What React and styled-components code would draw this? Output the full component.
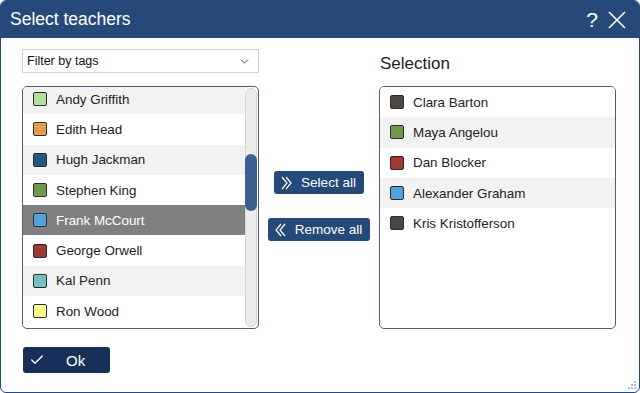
import React from "react";
import styled, { createGlobalStyle } from "styled-components";
import { ChevronDown, Check } from "lucide-react";

const teachers = [
  { name: "Andy Griffith", color: "#b3dea0" },
  { name: "Edith Head", color: "#e79c50" },
  { name: "Hugh Jackman", color: "#24577f" },
  { name: "Stephen King", color: "#6e9a50" },
  { name: "Frank McCourt", color: "#4ea3e0", selected: true },
  { name: "George Orwell", color: "#9e3a36" },
  { name: "Kal Penn", color: "#78bfc0" },
  { name: "Ron Wood", color: "#ffff8c" },
];

const selection = [
  { name: "Clara Barton", color: "#4f4742" },
  { name: "Maya Angelou", color: "#6e9a50" },
  { name: "Dan Blocker", color: "#9e3a36" },
  { name: "Alexander Graham", color: "#4ea3e0" },
  { name: "Kris Kristofferson", color: "#4f4742" },
];

// thin double chevron, flipped for "remove"
const Chevrons = ({ left }) => (
  <svg width="11" height="14" viewBox="0 0 11 14">
    <path
      d={left ? "M10 1 L5 7 L10 13 M6 1 L1 7 L6 13" : "M1 1 L6 7 L1 13 M5 1 L10 7 L5 13"}
      fill="none"
      stroke="#fff"
      strokeWidth="1.2"
    />
  </svg>
);

const App = () => {
  return (
    <>
      <GlobalStyle />
      <Dialog>
        <TitleBar>
          <Title>Select teachers</Title>
          <TitleTools>
            <Help>?</Help>
            <svg width="18" height="18" viewBox="0 0 18 18">
              <path d="M1 1 L17 17 M17 1 L1 17" stroke="#fff" strokeWidth="1.6" />
            </svg>
          </TitleTools>
        </TitleBar>
        <Body>
          <Columns>
            <Filter>
              <span>Filter by tags</span>
              <ChevronDown size={13} strokeWidth={1.6} color="#333" />
            </Filter>
            <div />
            <Heading>Selection</Heading>

            <ListBox>
              <Items offset="-3px">
                {teachers.map((t, i) => (
                  <Row key={t.name} striped={i % 2 === 0} selected={t.selected}>
                    <Swatch color={t.color} />
                    {t.name}
                  </Row>
                ))}
              </Items>
              <Track>
                <Thumb />
              </Track>
            </ListBox>

            <Actions>
              <ActionButton>
                <Chevrons />
                Select all
              </ActionButton>
              <ActionButton>
                <Chevrons left />
                Remove all
              </ActionButton>
            </Actions>

            <ListBox>
              <Items>
                {selection.map((t, i) => (
                  <Row key={t.name} striped={i % 2 === 1}>
                    <Swatch color={t.color} />
                    {t.name}
                  </Row>
                ))}
              </Items>
            </ListBox>
          </Columns>
          <Footer>
            <OkButton>
              <Check size={16} strokeWidth={2} />
              <span>Ok</span>
            </OkButton>
          </Footer>
        </Body>
        <Grip>
          <svg width="10" height="10" viewBox="0 0 10 10">
            <rect x="7" y="1" width="2" height="2" fill="#b8bec8" />
            <rect x="4" y="4" width="2" height="2" fill="#b8bec8" />
            <rect x="7" y="4" width="2" height="2" fill="#b8bec8" />
            <rect x="1" y="7" width="2" height="2" fill="#b8bec8" />
            <rect x="4" y="7" width="2" height="2" fill="#b8bec8" />
            <rect x="7" y="7" width="2" height="2" fill="#b8bec8" />
          </svg>
        </Grip>
      </Dialog>
    </>
  );
};

export default App;

const GlobalStyle = createGlobalStyle`
  html, body {
    margin: 0;
    padding: 0;
    background: #ffffff;
  }
  * {
    box-sizing: border-box;
  }
  body {
    font-family: "Liberation Sans", Arial, sans-serif;
  }
`;

const Dialog = styled.div`
  position: relative;
  width: 640px;
  height: 393px;
  border: 1px solid #254978;
  border-radius: 6px;
  overflow: hidden;
  background: #fff;
  display: flex;
  flex-direction: column;
`;

const TitleBar = styled.div`
  height: 37px;
  background: #254978;
  display: flex;
  align-items: center;
  justify-content: space-between;
  padding: 0 13px 0 9px;
  color: #fff;
  flex-shrink: 0;
`;

const Title = styled.div`
  font-size: 17.5px;
  padding-bottom: 1px;
`;

const TitleTools = styled.div`
  display: flex;
  align-items: center;
  gap: 10px;
`;

const Help = styled.span`
  font-size: 21px;
  line-height: 1;
`;

const Body = styled.div`
  flex: 1;
  padding: 11px 23px 0 21px;
  display: flex;
  flex-direction: column;
`;

const Columns = styled.div`
  display: grid;
  grid-template-columns: 237px 1fr 237px;
  grid-template-rows: 37px 243px;
`;

const Filter = styled.div`
  height: 24px;
  border: 1px solid #d0d0d0;
  display: flex;
  align-items: center;
  justify-content: space-between;
  padding: 0 7px 0 4px;
  font-size: 12.5px;
  color: #111;
`;

const Heading = styled.div`
  font-size: 17px;
  color: #222;
  line-height: 24px;
  padding: 3px 0 0 1px;
`;

const ListBox = styled.div`
  border: 1px solid #4d5d75;
  border-radius: 5px;
  overflow: hidden;
  display: flex;
  position: relative;
`;

const Items = styled.div`
  flex: 1;
  margin-top: ${({ offset }) => offset || "0"};
`;

const Row = styled.div`
  height: 30.3px;
  display: flex;
  align-items: center;
  gap: 9px;
  padding-left: 10px;
  font-size: 13.4px;
  color: ${({ selected }) => (selected ? "#fff" : "#222")};
  background: ${({ selected, striped }) =>
    selected ? "#808080" : striped ? "#f2f2f2" : "#ffffff"};
`;

const Swatch = styled.span`
  width: 14px;
  height: 14px;
  border: 1px solid #2b2b2b;
  border-radius: 2px;
  background: ${({ color }) => color};
  flex-shrink: 0;
`;

const Track = styled.div`
  width: 12px;
  margin: 1px 1px 1px 0;
  border: 1px solid #d6d6d6;
  border-radius: 6px;
  background: #ececec;
  padding-top: 65px;
`;

const Thumb = styled.div`
  height: 57px;
  margin: 0 -1px;
  border-radius: 6px;
  background: #3e5f8d;
`;

const Actions = styled.div`
  display: flex;
  flex-direction: column;
  align-items: center;
  justify-content: center;
  gap: 24px;
  padding-bottom: 3px;
`;

const ActionButton = styled.button`
  height: 23px;
  display: flex;
  align-items: center;
  gap: 9px;
  padding: 0 8px 0 7px;
  border: none;
  border-radius: 3px;
  background: #254978;
  color: #fff;
  font-family: "Liberation Sans", Arial, sans-serif;
  font-size: 13.5px;
`;

const Footer = styled.div`
  padding-top: 18px;
  padding-left: 1px;
`;

const OkButton = styled.button`
  width: 87px;
  height: 26px;
  display: flex;
  align-items: center;
  padding: 0 0 0 6px;
  border: none;
  border-radius: 3px;
  background: #17305a;
  color: #fff;
  font-family: "Liberation Sans", Arial, sans-serif;
  font-size: 15px;

  span {
    margin-left: 21px;
  }
`;

const Grip = styled.div`
  position: absolute;
  right: 2px;
  bottom: 2px;
  display: flex;
`;
